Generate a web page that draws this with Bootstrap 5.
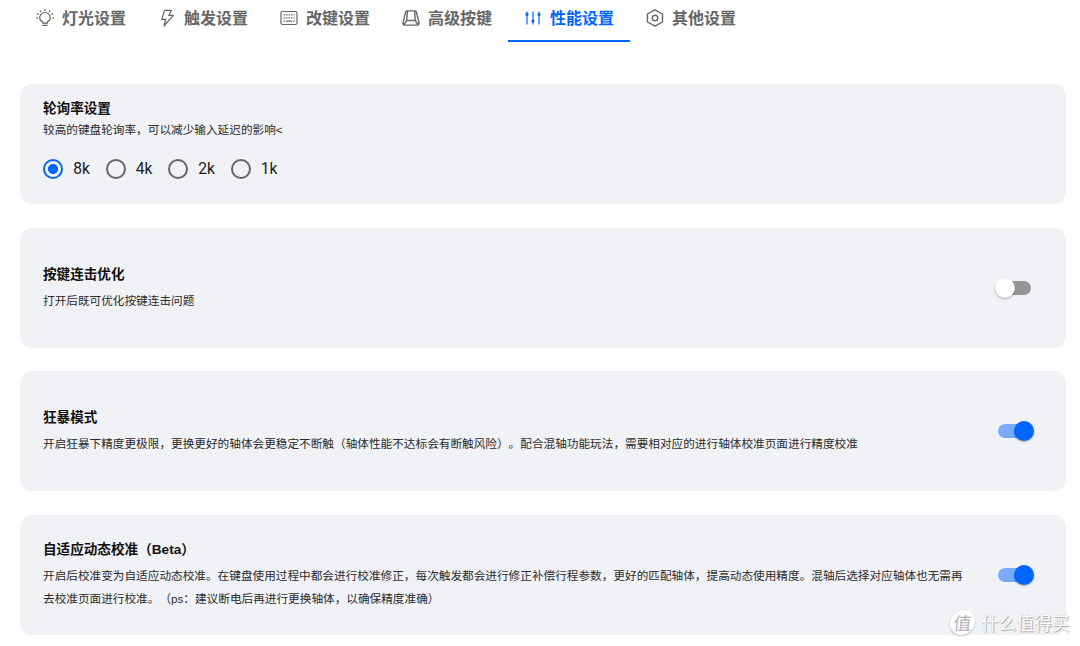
<!DOCTYPE html>
<html lang="zh-CN">
<head>
<meta charset="utf-8">
<meta name="viewport" content="width=device-width, initial-scale=1">
<title>性能设置</title>
<link rel="stylesheet" href="https://cdn.jsdelivr.net/npm/bootstrap@5.3.0/dist/css/bootstrap.min.css">
<style>
  body { font-family: "Liberation Sans", "Noto Sans CJK SC", sans-serif; color: #1b1b1d; height: 646px; overflow: hidden; background: #fff; text-spacing-trim: space-all; font-kerning: none; }
  .tabs-bar { height: 41.5px; padding-left: 20px; }
  .tabs-bar .nav-link { width: 122px; height: 41.5px; padding: 0 0 4px 16px; font-size: 16px; line-height: 24px; font-weight: 700; color: #666; border-radius: 0; border-bottom: 2px solid transparent; gap: 8px; white-space: nowrap; }
  .tabs-bar .nav-link span { padding-top: 2px; }
  .tabs-bar .nav-link.active { color: #0066ff; border-bottom-color: #0066ff; }
  .tabs-bar svg { width: 18px; height: 18px; flex: none; fill: none; stroke: currentColor; stroke-width: 1.2; }
  .panels { padding: 42.4px 14px 0 20px; gap: 23.7px; }
  .panel { height: 120px; border-radius: 12px; background: #f1f2f6; padding: 0 31px 0 23px; }
  .panel h2 { font-size: 13.6px; line-height: 20px; font-weight: 700; color: #111; margin: 0 0 4px; }
  .panel p { font-size: 11.653px; line-height: 23px; margin: 0; color: #2b2b2b; }
  .panel .first-title { padding-top: 15px; margin: 0 0 -1px; }
  .copy { width: 926px; padding-top: 1px; }
  .form-check-input.rate { width: 20px; height: 20px; margin: 0; border: 2px solid #666; background: none; box-shadow: none; }
  .form-check-input.rate:checked { border-color: #0066ff; background: radial-gradient(circle, #0066ff 4.7px, transparent 5.3px); }
  .rates { margin-top: 18.5px; }
  .rate-item { width: 62.5px; gap: 10.3px; font-family: Roboto, sans-serif; font-size: 15.6px; line-height: 20px; }
  .toggle { width: 36px; height: 20px; margin-right: 1px; }
  .toggle.off { margin-right: 4px; }
  .toggle.off .track { margin-left: 2px; }
  .toggle .track { display: block; width: 34px; height: 14px; border-radius: 7px; background: #969698; }
  .toggle .thumb { width: 20px; height: 20px; border-radius: 50%; background: #fff; box-shadow: 0 1px 2px rgba(0,0,0,.32); }
  .toggle.on .track { background: #79abfa; }
  .toggle.on .thumb { background: #0066ff; }
  .brand-mark { left: 950px; top: 610px; gap: 6px; font-family: "Noto Sans CJK SC", sans-serif; font-size: 17.7px; line-height: 25px; color: #fff; text-shadow: 1px 1px 1px #aaa, 0 0 1px #bbb; white-space: nowrap; }
  .brand-mark .seal { width: 25px; height: 25px; line-height: 24px; text-align: center; border-radius: 50%; background: #fff; color: #b4b4b8; text-shadow: none; box-shadow: 0 1px 2px rgba(0,0,0,.25); font-size: 18px; font-weight: 400; transform: skewX(-6deg); }
</style>
</head>
<body>
<nav class="nav flex-nowrap tabs-bar">
  <a class="nav-link d-flex align-items-center" href="#"><svg viewBox="0 0 18 18"><path d="M6.600 14.200v-1.400C4.900 12 3.700 10.500 3.700 8.800a5.300 5.300 0 0 1 10.600 0c0 1.700-1.200 3.200-2.900 4v1.400zM6.500 16.400h5M9 0v2M4 1.400l1 1.700M14 1.400l-1 1.700M.9 4.600l1.700.9M17.100 4.600l-1.700.9M0 9.200h1.700M18 9.200h-1.700"/></svg><span>灯光设置</span></a>
  <a class="nav-link d-flex align-items-center" href="#"><svg viewBox="0 0 18 18"><path stroke-linejoin="round" d="M6.500 1.300h7L10.800 6.400h4.500L6 17l1.700-6.600H3.800z"/></svg><span>触发设置</span></a>
  <a class="nav-link d-flex align-items-center" href="#"><svg viewBox="0 0 18 18"><rect x="1" y="2.500" width="16" height="13" rx="1.500"/><path stroke-dasharray="1.500 1" d="M3.500 5.800h11M3.500 8.800h11"/><path d="M3.500 12.200h1.500M6 12.200h6M13 12.200h1.500"/></svg><span>改键设置</span></a>
  <a class="nav-link d-flex align-items-center" href="#"><svg viewBox="0 0 18 18"><path stroke-linejoin="round" stroke-width="1.400" d="M5 1.900h8q1.200 0 1.400 1.200l2.500 10.300q.3 2.700-1.300 2.700H2.400q-1.600 0-1.300-2.700L3.600 3.100q.2-1.200 1.400-1.200zM5.400 2.500l-.6 8q0 1 1 1h6.400q1 0 1-1l-.6-8M4.800 11.500l-2.800 4M13.200 11.500l2.800 4"/></svg><span>高级按键</span></a>
  <a class="nav-link active d-flex align-items-center" href="#"><svg viewBox="0 0 18 18"><path d="M3 2.500v13M9 2.500v13M15 2.500v13"/><g fill="currentColor" stroke="none"><circle cx="3" cy="5.500" r="1.600"/><circle cx="9" cy="12" r="1.600"/><circle cx="15" cy="5.500" r="1.600"/></g></svg><span>性能设置</span></a>
  <a class="nav-link d-flex align-items-center" href="#"><svg viewBox="0 0 18 18"><path stroke-linejoin="round" stroke-width="1.400" d="M9 .8l7.500 4.200v8L9 17.200 1.500 13V5z"/><circle cx="9" cy="9" r="2.800" stroke-width="1.400"/></svg><span>其他设置</span></a>
</nav>
<main class="d-flex flex-column panels">
  <section class="panel">
    <h2 class="first-title">轮询率设置</h2>
    <p>较高的键盘轮询率，可以减少输入延迟的影响&lt;</p>
    <div class="d-flex rates">
      <label class="d-flex align-items-center rate-item"><input class="form-check-input rate" type="radio" name="rate" checked><span>8k</span></label>
      <label class="d-flex align-items-center rate-item"><input class="form-check-input rate" type="radio" name="rate"><span>4k</span></label>
      <label class="d-flex align-items-center rate-item"><input class="form-check-input rate" type="radio" name="rate"><span>2k</span></label>
      <label class="d-flex align-items-center rate-item"><input class="form-check-input rate" type="radio" name="rate"><span>1k</span></label>
    </div>
  </section>
  <section class="panel d-flex align-items-center justify-content-between">
    <div class="copy"><h2>按键连击优化</h2><p>打开后既可优化按键连击问题</p></div>
    <div class="toggle off d-flex align-items-center position-relative" role="switch" aria-checked="false"><span class="track"></span><span class="thumb position-absolute start-0"></span></div>
  </section>
  <section class="panel d-flex align-items-center justify-content-between">
    <div class="copy"><h2>狂暴模式</h2><p>开启狂暴下精度更极限，更换更好的轴体会更稳定不断触（轴体性能不达标会有断触风险）。配合混轴功能玩法，需要相对应的进行轴体校准页面进行精度校准</p></div>
    <div class="toggle on d-flex align-items-center position-relative" role="switch" aria-checked="true"><span class="track"></span><span class="thumb position-absolute end-0"></span></div>
  </section>
  <section class="panel d-flex align-items-center justify-content-between">
    <div class="copy"><h2>自适应动态校准（Beta）</h2><p>开启后校准变为自适应动态校准。在键盘使用过程中都会进行校准修正，每次触发都会进行修正补偿行程参数，更好的匹配轴体，提高动态使用精度。混轴后选择对应轴体也无需再去校准页面进行校准。（ps：建议断电后再进行更换轴体，以确保精度准确）</p></div>
    <div class="toggle on d-flex align-items-center position-relative" role="switch" aria-checked="true"><span class="track"></span><span class="thumb position-absolute end-0"></span></div>
  </section>
</main>
<div class="brand-mark position-absolute d-flex"><span class="seal">值</span><span>什么值得买</span></div>
<script src="https://cdn.jsdelivr.net/npm/bootstrap@5.3.0/dist/js/bootstrap.bundle.min.js"></script>
</body>
</html>
